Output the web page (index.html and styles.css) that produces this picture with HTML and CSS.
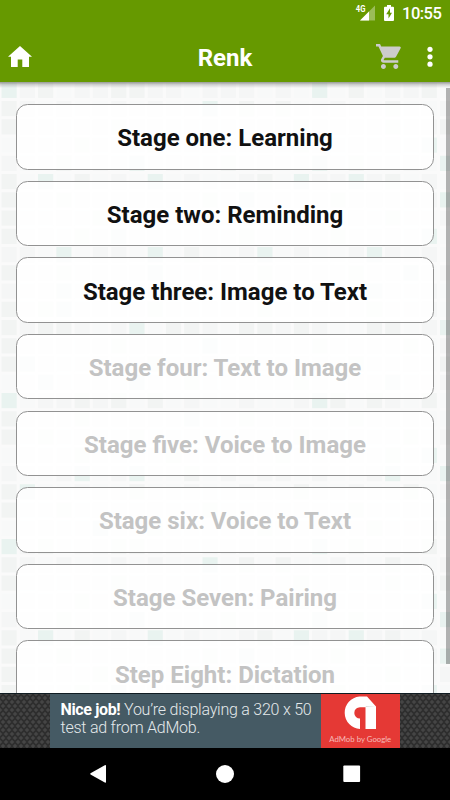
FILE: index.html
```html
<!DOCTYPE html>
<html lang="en">
<head>
<meta charset="utf-8">
<title>Renk</title>
<link rel="stylesheet" href="styles.css">
</head>
<body>
<div class="screen">
  <header class="top">
    <div class="status">
      <svg class="signal" width="21" height="20" viewBox="0 0 21 20"><path d="M5 18.5 20 3.5V18.5Z" fill="#fff" opacity=".35"/><path d="M5 18.5 14 9.5V18.5Z" fill="#fff"/><text x="0.8" y="10" class="fourg" textLength="9.6" lengthAdjust="spacingAndGlyphs">4G</text></svg>
      <svg class="battery" width="10" height="16" viewBox="0 0 10 16"><path d="M3 0H7V1.7H9Q10 1.7 10 2.7V15Q10 16 9 16H1Q0 16 0 15V2.7Q0 1.7 1 1.7H3Z" fill="#fff"/><path d="M6 3.2 2.2 9.3H4.5V13.5L8 7.7H6Z" fill="#690"/></svg>
      <span class="clock">10:55</span>
    </div>
    <div class="toolbar">
      <svg class="home" width="24" height="21" viewBox="0 0 24 21"><path d="M12 0 0 10.8H3V21H9.7V13.5H14.3V21H21V10.8H24Z" fill="#fff"/></svg>
      <h1 class="title">Renk</h1>
      <svg class="cart" width="25" height="25" viewBox="1 2 20.2 20" preserveAspectRatio="none"><path fill="#ccc" d="M7 18c-1.1 0-1.99.9-1.99 2S5.9 22 7 22s2-.9 2-2-.9-2-2-2zM1 2v2h2l3.6 7.59-1.35 2.45c-.16.28-.25.61-.25.96 0 1.1.9 2 2 2h12v-2H7.42c-.14 0-.25-.11-.25-.25l.03-.12.9-1.63h7.45c.75 0 1.41-.41 1.75-1.03l3.58-6.49A1 1 0 0 0 20 4H5.21l-.94-2H1zm16 16c-1.1 0-1.99.9-1.99 2s.89 2 1.99 2 2-.9 2-2-.9-2-2-2z"/></svg>
      <svg class="more" width="6" height="22" viewBox="0 0 6 22"><g fill="#fff"><circle cx="3" cy="3.3" r="2.6"/><circle cx="3" cy="10.8" r="2.6"/><circle cx="3" cy="18.2" r="2.6"/></g></svg>
    </div>
  </header>
  <main class="content">
    <svg class="tiles" id="tiles" width="450" height="611" viewBox="0 82 450 611"></svg>
    <div class="shade"></div>
    <div class="list">
      <button class="stage">Stage one: Learning</button>
      <button class="stage">Stage two: Reminding</button>
      <button class="stage">Stage three: Image to Text</button>
      <button class="stage off">Stage four: Text to Image</button>
      <button class="stage off">Stage five: Voice to Image</button>
      <button class="stage off">Stage six: Voice to Text</button>
      <button class="stage off">Stage Seven: Pairing</button>
      <button class="stage off">Step Eight: Dictation</button>
    </div>
    <div class="scrollbar"></div>
  </main>
  <section class="ad">
    <div class="banner">
      <p class="copy"><b>Nice job!</b> You’re displaying a 320 x 50<br>test ad from AdMob.</p>
      <div class="brand">
        <svg width="34" height="34" viewBox="0 0 34 34"><path d="M16.5 .5H24L33 10.5V33H22.5V11.2H17A5.7 5.7 0 0 0 17 22.6V33A16.3 16.3 0 0 1 16.5 .5Z" fill="#fff"/><path d="M22.5 11H33L23 10Z" fill="#ddd"/></svg>
        <span class="by">AdMob by <b>Google</b></span>
      </div>
    </div>
  </section>
  <nav class="nav">
    <svg width="450" height="52" viewBox="0 748 450 52"><g fill="#fff"><path d="M90.5 773.2Q90 773.8 90.5 774.4L104.8 782.5Q106 783 106 782V765.7Q106 764.6 104.8 765.2Z"/><circle cx="225" cy="774" r="9"/><rect x="343.3" y="765.5" width="16.8" height="16.6" rx="1"/></g></svg>
  </nav>
</div>
<script src="tiles.js"></script>
</body>
</html>
```
FILE: tiles.js
```js
// Mosaic background: one string per row, one letter per column.
// t = mint, g = grey, l = light, . = faintest
const rows = [
  "tlg.llggll.lll.l.t.g.llg.",
  "gl.l..l.l..t.g.g..l..g..l",
  "g.l.l.g.l..l.l..g.l..g.lg",
  ".l.lg.l.g..l..l.gl.l.l.t.",
  "l..g.l.t.l..g.l..t.g..l.t",
  "g.t.g.l.t.l..lg.tlltlg.l.",
  "gl.g..l.l..g.t.l..g.l..lt",
  "g..l.g..l.g..l..g..l.g..l",
  "g.l.g.t.l..l.g..l.g..l.t.",
  "ll.t.ll.t.g..lt.l..ltl.l.",
  "g..g.l..t..l..g..l.g..t.l",
  "l.lt..l..g..l..l.g..tl.l.",
  "g.gt.l..g..l..g..l..g..l.",
  "glggl.lt.ggl.gglgl..gg.lt",
  "g..l..g.l..t..l..g.l..g.l",
  "gtl..l..g..l.g..l..g..l.g",
  "..t.l..t..g..l..g..l.t..l",
  "t.llglg.g.l..l..ltg.gl.g.",
  "g.l.g..l..t..g..l..g..l..",
  "g.g.l..g..l..l..g..l..g.l",
  ".l..g..l.g..l..g..l..g.t.",
  "l..lt.lt..g.l.ll.l..lt..t",
  "gt..l..g..l..l..g..l..g.l",
  "g..g.l..l..g..l.l..g..l..",
  "..l..t..g..l..g..l..g..l."
];
const fills = { t: "#e9f3f0", g: "#f2f4f3", l: "#f5f6f6", ".": "#f8f9f9" };
let out = "";
for (let r = 0; r < 34; r++) {
  const row = rows[r % 25];
  for (let c = 0; c < 25; c++) {
    out += `<rect x="${1.5 + 18.27 * c}" y="${82.75 + 18.25 * r}" width="15.2" height="15.2" fill="${fills[row[c]]}"/>`;
  }
}
document.getElementById("tiles").innerHTML = out;
```
FILE: styles.css
```css
* { box-sizing: border-box; }
body { margin: 0; font-family: Roboto, "Liberation Sans", sans-serif; }
.screen { width: 450px; height: 800px; display: flex; flex-direction: column; overflow: hidden; background: #000; }
.top { height: 82px; flex: none; background: #690; color: #fff; }
.status { height: 28px; display: flex; align-items: flex-start; justify-content: flex-end; padding-right: 9px; }
.signal { margin: 2px 8px 0 0; }
.fourg { font: bold 9px Roboto, sans-serif; fill: #fff; }
.battery { margin: 5px 8px 0 0; }
.clock { font-size: 16.5px; line-height: 28px; width: 39px; font-weight: 500; white-space: nowrap; letter-spacing: -.5px; }
.toolbar { height: 54px; display: grid; grid-template-columns: 40px 1fr 51px 6px; padding: 0 17px 0 8px; }
.home { margin-top: 18px; }
.title { margin: 0; padding-left: 26px; font-size: 24px; line-height: 60px; font-weight: 700; text-align: center; }
.cart { margin-top: 16px; }
.more { margin-top: 18px; }
.content { position: relative; height: 611px; flex: none; overflow: hidden; background: #fafafa; }
.tiles { position: absolute; left: 0; top: 0; }
.shade { position: absolute; left: 0; top: 0; width: 100%; height: 6px; background: linear-gradient(rgba(70,75,65,.55), rgba(140,140,140,.35) 45%, rgba(180,180,180,0)); }
.list { position: relative; display: flex; flex-direction: column; gap: 11.3px; padding: 22.3px 16.3px 0; }
.stage { height: 65.3px; flex: none; border: 1.3px solid #929292; border-radius: 11.5px; background: rgba(255,255,255,.84); color: #111; font: 700 24px/28px Roboto, sans-serif; padding: 3px 0 0; text-align: center; }
.off { color: #c3c3c3; }
.scrollbar { position: absolute; right: 0; top: 6px; width: 4.4px; height: 576px; background: rgba(0,0,0,.29); }
.ad { height: 55px; flex: none; display: flex; justify-content: center; background-color: #2e2e2e; background-image: radial-gradient(circle, #454545 0 1.4px, transparent 2px), radial-gradient(circle, #454545 0 1.4px, transparent 2px); background-size: 6px 8px; background-position: 0 0, 3px 4px; border-top: 1px solid #101c22; }
.banner { width: 350px; display: flex; background: #455a64; }
.copy { width: 270.5px; margin: 0; padding: 7px 0 0 10.5px; color: #e4e9eb; font-size: 16px; line-height: 18.3px; font-weight: 300; white-space: nowrap; letter-spacing: -.23px; }
.copy b { font-weight: 700; color: #fff; letter-spacing: -.35px; }
.brand { flex: 1; background: #e53935; display: flex; flex-direction: column; align-items: center; padding-top: 2px; }
.brand svg { margin-right: 1px; }
.by { color: #f7b9b7; font: 400 7.8px/12px Lato, sans-serif; margin-top: 3px; white-space: nowrap; }
.by b { font-weight: 400; }
.nav { height: 52px; flex: none; background: #000; }
.nav svg { display: block; }
```
